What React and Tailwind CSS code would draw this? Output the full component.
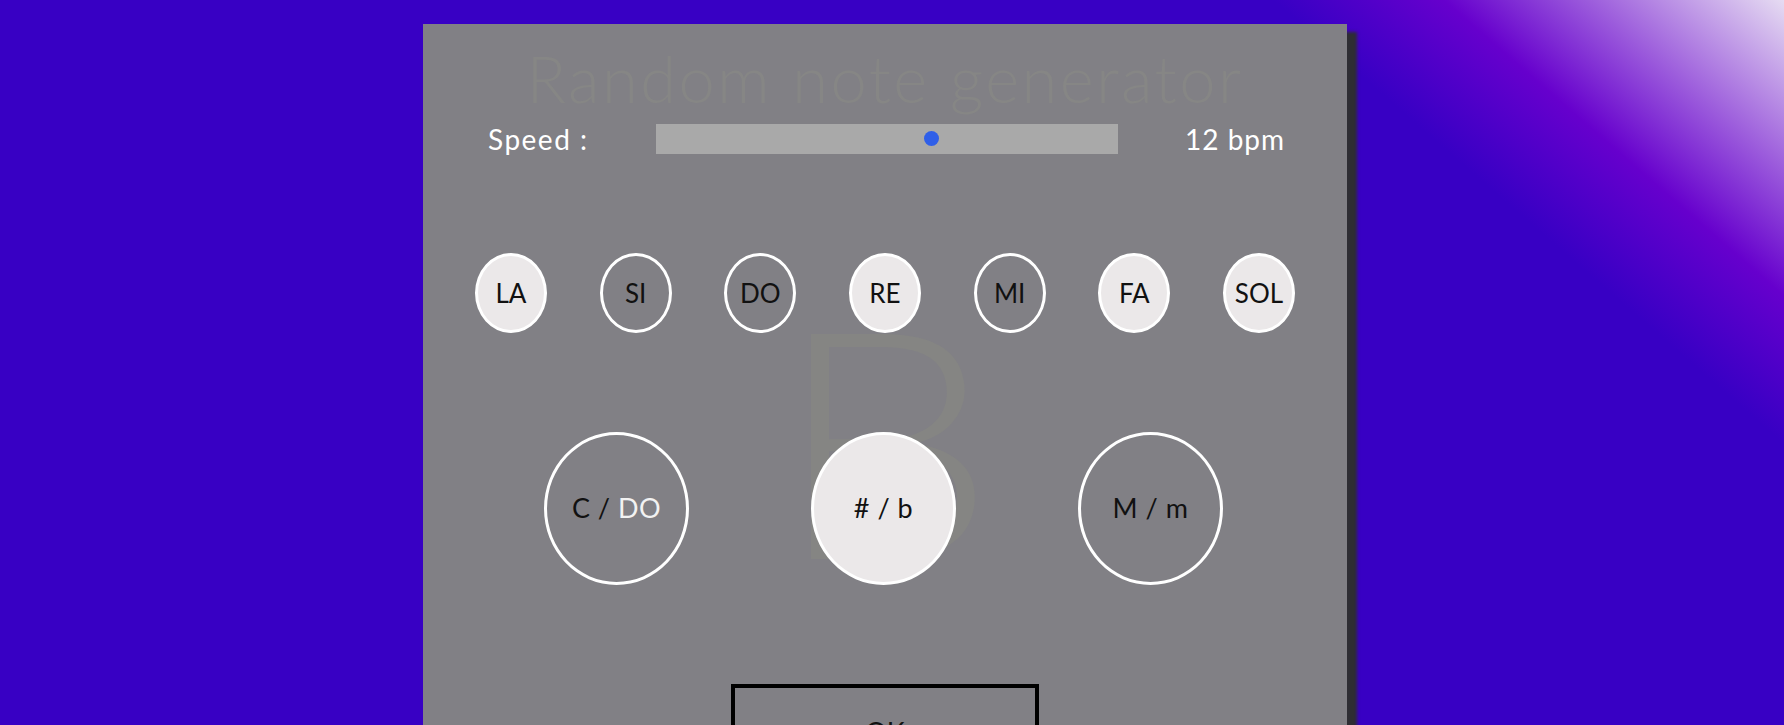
import React, { useState } from "react";

const NOTES = [
  { name: "LA", on: true },
  { name: "SI", on: false },
  { name: "DO", on: false },
  { name: "RE", on: true },
  { name: "MI", on: false },
  { name: "FA", on: true },
  { name: "SOL", on: true },
];

export default function App() {
  const [speed] = useState(12);

  return (
    <div
      className="h-[725px] w-full overflow-hidden pl-[423px] pt-[24px] bg-[linear-gradient(41deg,#3800c4_0%,#3800c4_80.5%,#6600cd_87%,#9c5cdc_92.5%,#e6dcf2_100%)]"
      style={{ fontFamily: "Lato, 'Noto Sans', sans-serif" }}
    >
      <div className="relative w-[924px] h-[760px] bg-[#818085] shadow-[10px_8px_3px_#2e2d33]">
        {/* faint note watermark */}
        <div className="absolute left-0 right-0 top-[253px] text-center text-[318px] leading-none font-light text-[#858583] select-none scale-x-110">
          B
        </div>

        <div className="relative">
          <h1 className="pt-[22px] text-center text-[65px] leading-none font-light tracking-[2.5px] text-[#868685]">
            Random note generator
          </h1>

          {/* speed row */}
          <div className="mt-[13px] flex items-center h-[30px] pl-[65px]">
            <span className="w-[168px] text-[28px] tracking-[1.5px] text-white">Speed :</span>
            <div className="relative w-[462px] h-[30px] bg-[#a9a9a9]">
              <div className="absolute left-[268px] top-[7px] w-[15px] h-[15px] rounded-full bg-[#2f5fe8]" />
            </div>
            <span className="ml-[67px] text-[28px] tracking-[1px] text-white">{speed} bpm</span>
          </div>

          {/* notes */}
          <div className="mt-[99px] flex justify-between px-[52px]">
            {NOTES.map((n) => (
              <div
                key={n.name}
                className={`w-[72px] h-[80px] rounded-[50%] border-[3px] border-white flex items-center justify-center text-[26px] text-[#111] ${
                  n.on ? "bg-[#ebe8e9]" : ""
                }`}
              >
                {n.name}
              </div>
            ))}
          </div>

          {/* options */}
          <div className="mt-[99px] flex pl-[121px] gap-[122px]">
            <div className="w-[145px] h-[153px] rounded-[50%] border-[3px] border-white flex items-center justify-center text-[27px] tracking-[0.5px] text-[#111]">
              C /&nbsp;<span className="text-[#f2f2f2]">DO</span>
            </div>
            <div className="w-[145px] h-[153px] rounded-[50%] border-[3px] border-white bg-[#ebe8e9] flex items-center justify-center text-[27px] tracking-[0.5px] text-[#111]">
              # / b
            </div>
            <div className="w-[145px] h-[153px] rounded-[50%] border-[3px] border-white flex items-center justify-center text-[27px] tracking-[0.5px] text-[#111]">
              M / m
            </div>
          </div>

          <div className="mt-[99px] flex justify-center">
            <button className="w-[308px] h-[96px] border-[4px] border-black text-[27px] text-[#111]">
              OK
            </button>
          </div>
        </div>
      </div>
    </div>
  );
}
